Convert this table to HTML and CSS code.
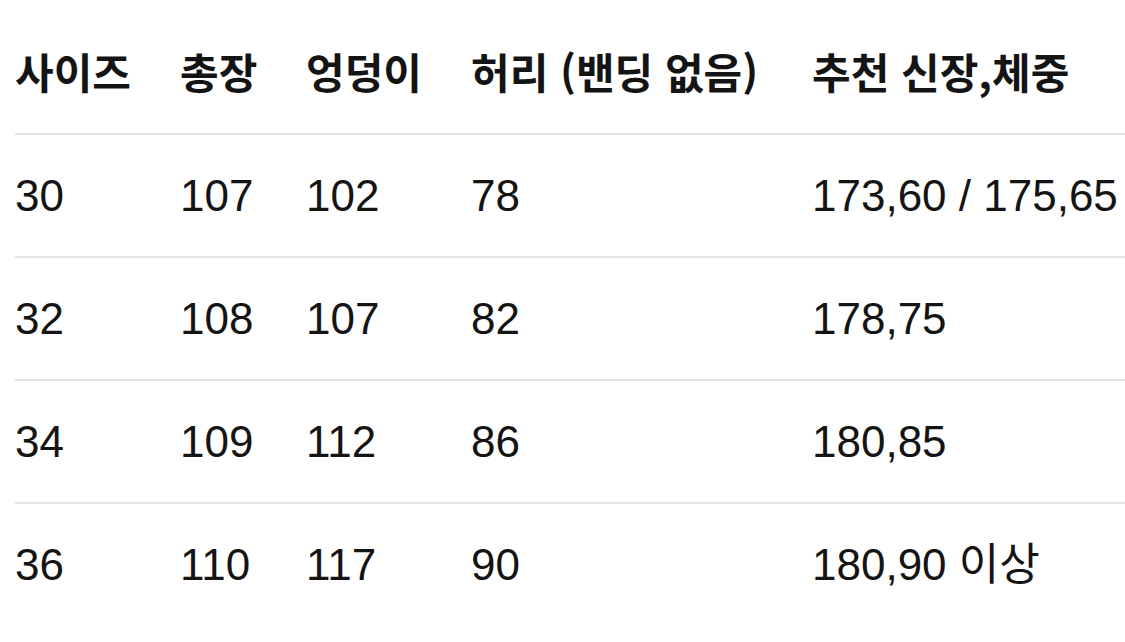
FILE: index.html
```html
<!DOCTYPE html>
<html lang="ko">
<head>
<meta charset="utf-8">
<link rel="stylesheet" href="styles.css">
</head>
<body>
<div class="table">
  <div class="row head">
    <div class="c">사이즈</div><div class="c">총장</div><div class="c">엉덩이</div><div class="c">허리 (밴딩 없음)</div><div class="c">추천 신장,체중</div>
  </div>
  <div class="row">
    <div class="c">30</div><div class="c">107</div><div class="c">102</div><div class="c">78</div><div class="c">173,60 / 175,65</div>
  </div>
  <div class="row">
    <div class="c">32</div><div class="c">108</div><div class="c">107</div><div class="c">82</div><div class="c">178,75</div>
  </div>
  <div class="row">
    <div class="c">34</div><div class="c">109</div><div class="c">112</div><div class="c">86</div><div class="c">180,85</div>
  </div>
  <div class="row last">
    <div class="c">36</div><div class="c">110</div><div class="c">117</div><div class="c">90</div><div class="c">180,90 이상</div>
  </div>
</div>
</body>
</html>
```
FILE: styles.css
```css
html, body {
  margin: 0;
  padding: 0;
  background: #ffffff;
}
body {
  width: 1125px;
  height: 642px;
  overflow: hidden;
  font-family: "Liberation Sans", "Noto Sans CJK KR", sans-serif;
  color: #141414;
}
.table {
  margin-left: 15px;
  padding-top: 9px;
}
.row {
  display: grid;
  grid-template-columns: 165px 126px 165px 341px 1fr;
  align-items: center;
  height: 121px;
  border-bottom: 2px solid #e4e4e4;
  font-size: 44px;
  white-space: nowrap;
}
.row.head {
  height: 124px;
  font-family: "Noto Sans CJK KR", sans-serif;
  font-weight: 700;
  font-size: 42px;
}
.row.last {
  border-bottom: none;
}
.c {
  line-height: 1;
}
```
